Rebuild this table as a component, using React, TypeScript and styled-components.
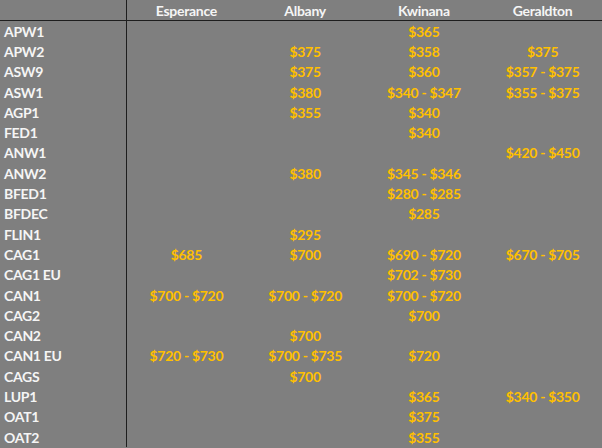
import styled, { createGlobalStyle } from 'styled-components'

const GlobalStyle = createGlobalStyle`
  html, body {
    margin: 0;
    padding: 0;
    background: #7f7f7f;
  }
`

const Sheet = styled.div`
  width: 602px;
  height: 448px;
  overflow: hidden;
  background: #7f7f7f;
  font-family: Lato, 'Liberation Sans', sans-serif;
  font-weight: 700;
  font-size: 14px;
  letter-spacing: -0.3px;
`

const Row = styled.div<{ $header?: boolean }>`
  display: grid;
  grid-template-columns: 127px repeat(4, 1fr);
  height: ${(p) => (p.$header ? '20px' : '20.3px')};
  border-bottom: ${(p) => (p.$header ? '1px solid #1e1e1e' : 'none')};
  align-items: center;
`

const Label = styled.div`
  height: 100%;
  display: flex;
  align-items: center;
  padding-left: 4px;
  border-right: 1.5px solid #1e1e1e;
  color: #f5f5f5;
  white-space: nowrap;
`

const Cell = styled.div<{ $header?: boolean }>`
  text-align: center;
  white-space: nowrap;
  color: ${(p) => (p.$header ? '#f5f5f5' : '#ffc000')};
`

const ports = ['Esperance', 'Albany', 'Kwinana', 'Geraldton']

const rows: [string, string, string, string, string][] = [
  ['APW1', '', '', '$365', ''],
  ['APW2', '', '$375', '$358', '$375'],
  ['ASW9', '', '$375', '$360', '$357 - $375'],
  ['ASW1', '', '$380', '$340 - $347', '$355 - $375'],
  ['AGP1', '', '$355', '$340', ''],
  ['FED1', '', '', '$340', ''],
  ['ANW1', '', '', '', '$420 - $450'],
  ['ANW2', '', '$380', '$345 - $346', ''],
  ['BFED1', '', '', '$280 - $285', ''],
  ['BFDEC', '', '', '$285', ''],
  ['FLIN1', '', '$295', '', ''],
  ['CAG1', '$685', '$700', '$690 - $720', '$670 - $705'],
  ['CAG1 EU', '', '', '$702 - $730', ''],
  ['CAN1', '$700 - $720', '$700 - $720', '$700 - $720', ''],
  ['CAG2', '', '', '$700', ''],
  ['CAN2', '', '$700', '', ''],
  ['CAN1 EU', '$720 - $730', '$700 - $735', '$720', ''],
  ['CAGS', '', '$700', '', ''],
  ['LUP1', '', '', '$365', '$340 - $350'],
  ['OAT1', '', '', '$375', ''],
  ['OAT2', '', '', '$355', ''],
]

export default function App() {
  return (
    <>
      <GlobalStyle />
      <Sheet>
        <Row $header>
          <Label />
          {ports.map((p) => (
            <Cell key={p} $header>
              {p}
            </Cell>
          ))}
        </Row>
        {rows.map(([grade, ...prices]) => (
          <Row key={grade}>
            <Label>{grade}</Label>
            {prices.map((v, i) => (
              <Cell key={i}>{v}</Cell>
            ))}
          </Row>
        ))}
      </Sheet>
    </>
  )
}
